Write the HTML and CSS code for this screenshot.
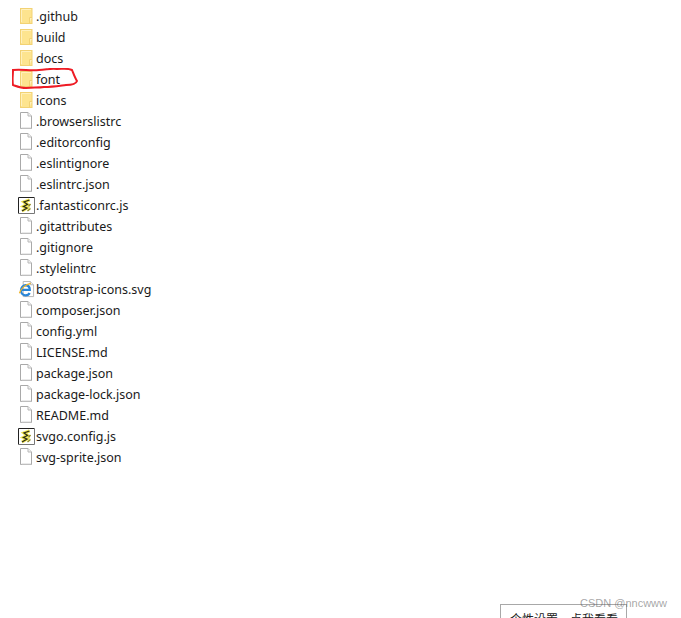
FILE: index.html
```html
<!DOCTYPE html>
<html lang="en">
<head>
<meta charset="utf-8">
<title>Files</title>
<link rel="stylesheet" href="styles.css">
</head>
<body>
<svg class="defs" width="0" height="0" aria-hidden="true">
  <symbol id="folder" viewBox="0 0 14 18">
    <rect x="1.5" y="1.5" width="11.5" height="15" fill="#fde48f" stroke="#f2d274"/>
    <path d="M2.5 15V2.5H12" fill="none" stroke="#fff0bd"/>
    <path d="M10.5 16V10.5H13" fill="#fff0bd" stroke="#f2d274"/>
  </symbol>
  <symbol id="file" viewBox="0 0 14 18">
    <path d="M1.5 .5H9L12.5 4V16.5H1.5Z" fill="#fff" stroke="#a9a9a9"/>
    <path d="M9 .5V4H12.5" fill="#f2f2f2" stroke="#b8b8b8"/>
    <path d="M2.5 16H12" stroke="#d5d5d5" fill="none"/>
  </symbol>
  <symbol id="js" viewBox="0 0 17 17">
    <path d="M.5 16.5V.5H16.5" fill="none" stroke="#222"/>
    <path d="M16.5 .5V16.5H.5" fill="none" stroke="#777"/>
    <rect x="1" y="1" width="15" height="15" fill="#fff"/>
    <path d="M11.5 3L6 5L9.5 7.5L5.5 9.5L9 11L4 14" fill="none" stroke="#f2e64a" stroke-width="3.2"/>
    <path d="M11.5 3L6 5L9.5 7.5L5.5 9.5L9 11L4 14" fill="none" stroke="#2c2c18" stroke-width="1.3"/>
    <path d="M12.5 7L10.5 9.5M12.5 11.5L9.5 14" fill="none" stroke="#8f8a20" stroke-width="1.4"/>
  </symbol>
  <symbol id="ie" viewBox="0 0 18 18">
    <path d="M5.5 .5H13L16.5 4V16.5H5.5Z" fill="#fff" stroke="#b5b5b5"/>
    <path d="M13 .5V4H16.5" fill="#eee" stroke="#b5b5b5"/>
    <path d="M4 9.5H12.5C12.5 6 10.8 4.5 8.2 4.5C5.4 4.5 3.2 6.8 3.2 10C3.2 13.2 5.4 15.2 8.2 15.2C10.2 15.2 11.6 14.3 12.3 12.8" fill="none" stroke="#2a86d8" stroke-width="2.4"/>
    <path d="M1.5 13C3 8 8 3.5 13.5 2.5" fill="none" stroke="#f0b428" stroke-width="1.3"/>
  </symbol>
</svg>

<ul class="files">
  <li class="row"><svg class="icon"><use href="#folder"/></svg><span>.github</span></li>
  <li class="row"><svg class="icon"><use href="#folder"/></svg><span>build</span></li>
  <li class="row"><svg class="icon"><use href="#folder"/></svg><span>docs</span></li>
  <li class="row"><svg class="icon"><use href="#folder"/></svg><span>font</span></li>
  <li class="row"><svg class="icon"><use href="#folder"/></svg><span>icons</span></li>
  <li class="row"><svg class="icon"><use href="#file"/></svg><span>.browserslistrc</span></li>
  <li class="row"><svg class="icon"><use href="#file"/></svg><span>.editorconfig</span></li>
  <li class="row"><svg class="icon"><use href="#file"/></svg><span>.eslintignore</span></li>
  <li class="row"><svg class="icon"><use href="#file"/></svg><span>.eslintrc.json</span></li>
  <li class="row"><svg class="icon icon-wide"><use href="#js"/></svg><span>.fantasticonrc.js</span></li>
  <li class="row"><svg class="icon"><use href="#file"/></svg><span>.gitattributes</span></li>
  <li class="row"><svg class="icon"><use href="#file"/></svg><span>.gitignore</span></li>
  <li class="row"><svg class="icon"><use href="#file"/></svg><span>.stylelintrc</span></li>
  <li class="row"><svg class="icon icon-wide"><use href="#ie"/></svg><span>bootstrap-icons.svg</span></li>
  <li class="row"><svg class="icon"><use href="#file"/></svg><span>composer.json</span></li>
  <li class="row"><svg class="icon"><use href="#file"/></svg><span>config.yml</span></li>
  <li class="row"><svg class="icon"><use href="#file"/></svg><span>LICENSE.md</span></li>
  <li class="row"><svg class="icon"><use href="#file"/></svg><span>package.json</span></li>
  <li class="row"><svg class="icon"><use href="#file"/></svg><span>package-lock.json</span></li>
  <li class="row"><svg class="icon"><use href="#file"/></svg><span>README.md</span></li>
  <li class="row"><svg class="icon icon-wide"><use href="#js"/></svg><span>svgo.config.js</span></li>
  <li class="row"><svg class="icon"><use href="#file"/></svg><span>svg-sprite.json</span></li>
</ul>

<svg class="scribble" viewBox="0 0 66 22" aria-hidden="true">
  <path d="M1 2C10 1 18 3 27 2C34 2 38 0 45 1C51 1 56 0 60 2C62 7 63 10 65 13C64 16 60 17 54 17C46 18 40 19 32 19C26 20 20 19 14 20C9 20 4 18 1 17C0 12 1 7 1 2Z" fill="none" stroke="#ee1c25" stroke-width="2"/>
</svg>

<div class="popup">个性设置、点我看看</div>
<div class="mark">CSDN @nncwww</div>
</body>
</html>
```
FILE: styles.css
```css
html, body {
  margin: 0;
  height: 618px;
  overflow: hidden;
  background: #fff;
}
body {
  position: relative;
  font-family: "Noto Sans", "Open Sans", sans-serif;
}
.defs {
  position: absolute;
}
.files {
  list-style: none;
  margin: 0;
  padding: 6px 0 0 19px;
}
.row {
  display: flex;
  align-items: center;
  height: 21px;
  font-size: 12.5px;
  color: #1a1a1a;
  white-space: nowrap;
}
.icon {
  width: 14px;
  height: 18px;
  margin-top: -2px;
  margin-right: 3px;
  flex: none;
}
.icon-wide {
  width: 17px;
  height: 17px;
  margin-top: 0;
  margin-left: -1px;
  margin-right: 1px;
}
.scribble {
  position: absolute;
  left: 12px;
  top: 68px;
  width: 66px;
  height: 22px;
}
.popup {
  position: absolute;
  left: 500px;
  top: 604px;
  width: 127px;
  height: 30px;
  box-sizing: border-box;
  border: 1px solid #a8a8a8;
  padding: 5px 0 0 9px;
  font-family: "Noto Sans CJK SC", sans-serif;
  font-size: 12px;
  color: #222;
  background: #fff;
  white-space: nowrap;
}
.mark {
  position: absolute;
  left: 580px;
  top: 597px;
  font-family: "Liberation Sans", sans-serif;
  font-size: 11px;
  color: rgba(90, 90, 90, .55);
  white-space: nowrap;
}
```
